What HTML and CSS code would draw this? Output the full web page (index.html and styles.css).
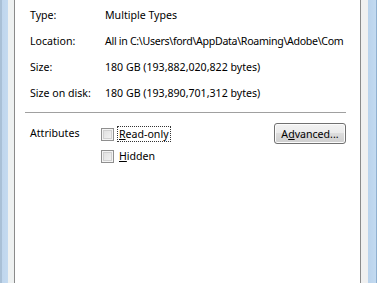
FILE: index.html
```html
<!DOCTYPE html>
<html lang="en">
<head>
    <meta charset="UTF-8">
    <title>Properties</title>
    <link rel="stylesheet" href="styles.css">
</head>
<body>
    <div class="window">
        <div class="frame frame-left"></div>

        <div class="panel">
            <div class="props">
                <div class="prop-label">Type:</div>
                <div class="prop-value">Multiple Types</div>

                <div class="prop-label">Location:</div>
                <div class="prop-value path">All in C:\Users\ford\AppData\Roaming\Adobe\Com</div>

                <div class="prop-label">Size:</div>
                <div class="prop-value">180 GB (193,882,020,822 bytes)</div>

                <div class="prop-label">Size on disk:</div>
                <div class="prop-value">180 GB (193,890,701,312 bytes)</div>
            </div>

            <div class="separator"></div>

            <div class="attributes">
                <div class="attr-label">Attributes</div>
                <div class="attr-checks">
                    <label class="check focused">
                        <span class="box"></span>
                        <span class="check-text"><u>R</u>ead-only</span>
                    </label>
                    <label class="check">
                        <span class="box"></span>
                        <span class="check-text"><u>H</u>idden</span>
                    </label>
                </div>
                <button class="win-button">A<u>d</u>vanced...</button>
            </div>
        </div>

        <div class="frame frame-right"></div>
    </div>
</body>
</html>
```

FILE: styles.css
```css
* {
    margin: 0;
    padding: 0;
    box-sizing: border-box;
}

body {
    width: 377px;
    height: 283px;
    overflow: hidden;
    font-family: 'Noto Sans', sans-serif;
    font-size: 10.6px;
    color: #000;
    background: #fff;
}

.window {
    display: flex;
    height: 283px;
}

.frame {
    flex: none;
    height: 100%;
}

.frame-left {
    width: 14px;
    background: linear-gradient(to right, #a9c0d6 0, #a9c0d6 2px, #bfd6ed 2px, #c4daf0 8px, #eef1f1 8px, #eef1f1 14px);
}

.frame-right {
    width: 16px;
    background: linear-gradient(to right, #f0f0f0 0, #f0f0f0 7px, #bad3ec 7px, #c3daf0 15px, #8fb0d0 15px);
}

.panel {
    flex: 1;
    background: #fff;
    border-left: 1px solid #8a8a8a;
    border-right: 1px solid #8a8a8a;
    padding: 2px 0 0 15px;
    overflow: hidden;
}

.props {
    display: grid;
    grid-template-columns: 75px 248px;
    grid-auto-rows: 26px;
    align-items: center;
}

.prop-value {
    white-space: nowrap;
}

.path {
    letter-spacing: -0.3px;
}

.separator {
    height: 1px;
    background: #a0a0a0;
    margin: 6px 0 0 -5px;
    width: 321px;
}

.attributes {
    display: flex;
    margin-top: 9px;
}

.attr-label {
    width: 71px;
    padding-top: 4px;
}

.attr-checks {
    display: flex;
    flex-direction: column;
    gap: 6px;
    width: 173px;
    padding-top: 4px;
}

.check {
    display: flex;
    align-items: center;
    gap: 3px;
}

.box {
    width: 13px;
    height: 13px;
    border: 1px solid #8f8f8f;
    background: linear-gradient(135deg, #dcdcdc, #f6f6f6);
    box-shadow: inset 0 0 0 1px #f4f4f4, inset 0 0 0 2px #d0d0d0;
}

.check-text {
    padding: 0 1px;
    line-height: 14px;
    border: 1px solid transparent;
}

.focused .check-text {
    border: 1px dotted #333;
}

.win-button {
    width: 72px;
    height: 21px;
    margin-top: 1px;
    font-family: inherit;
    font-size: 10.6px;
    color: #000;
    border: 1px solid #707070;
    border-radius: 3px;
    background: linear-gradient(to bottom, #f2f2f2 0, #ebebeb 50%, #dddddd 50%, #cfcfcf 100%);
    box-shadow: inset 0 0 0 1px #fcfcfc;
}
```
